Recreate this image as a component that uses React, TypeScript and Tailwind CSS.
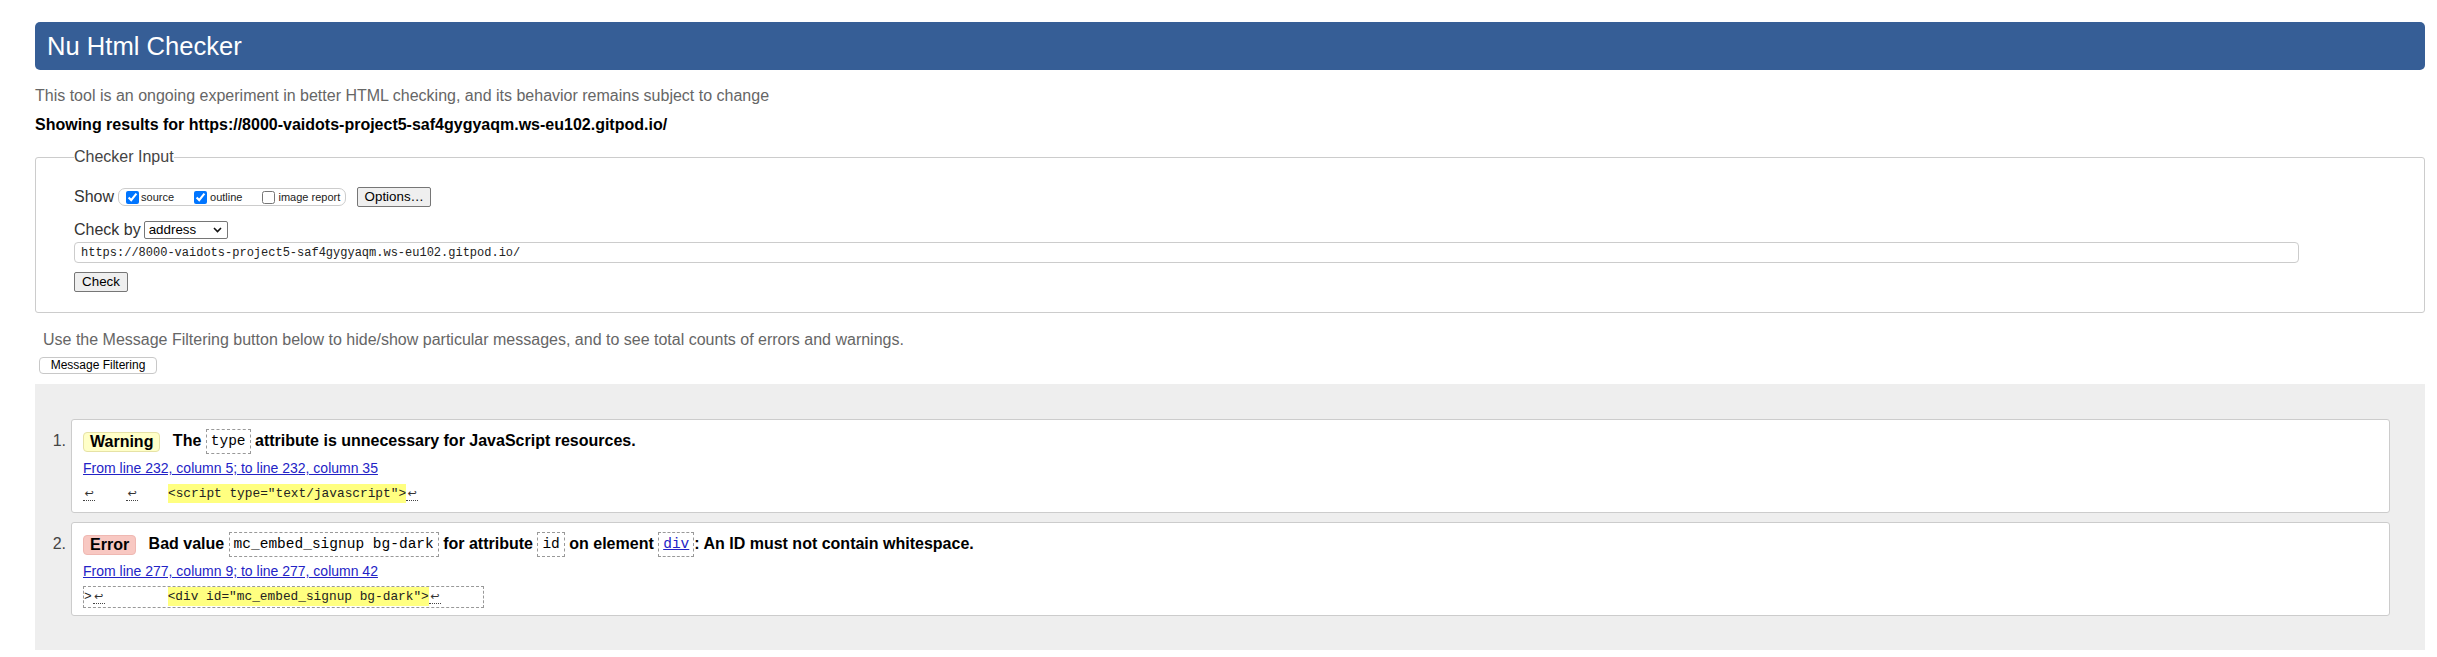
import React from 'react'

const mono = "font-['Liberation_Mono','DejaVu_Sans_Mono',monospace]"

// line break marker in source extracts
function Ret({ className = '' }: { className?: string }) {
  return (
    <span
      className={`inline-block w-[12px] border-b border-dotted border-[#444] text-center align-middle font-['DejaVu_Sans',sans-serif] text-[11px] leading-[13px] text-[#333] ${className}`}
    >
      ↩
    </span>
  )
}

function Code({ children }: { children: React.ReactNode }) {
  return (
    <code
      className={`inline-block h-[25px] border border-dashed border-[#999] px-[4px] align-middle text-[14.5px] font-normal leading-[23px] ${mono}`}
    >
      {children}
    </code>
  )
}

function Hl({ children }: { children: React.ReactNode }) {
  return <span className="bg-[#ffff80] py-[2px]">{children}</span>
}

interface MessageProps {
  n: number
  kind: 'warning' | 'error'
  title: React.ReactNode
  location: string
  extract: React.ReactNode
}

function Message({ n, kind, title, location, extract }: MessageProps) {
  return (
    <li className="flex">
      <span className="mt-[9px] w-[36px] shrink-0 pr-[5px] text-right text-[16px] leading-[25px] text-[#444]">
        {n}.
      </span>
      <div className="flex-1 rounded-[3px] border border-[#ccc] bg-white pb-[7px] pl-[11px] pt-[8px]">
        <p className="h-[25px] whitespace-nowrap text-[16px] font-bold leading-[25px]">
          {kind === 'warning' ? (
            <span className="mr-[8px] inline-block h-[20px] rounded-[4px] border border-[#e6e2a6] bg-[#ffffc8] px-[6px] align-middle leading-[18px]">
              Warning
            </span>
          ) : (
            <span className="mr-[8px] inline-block h-[20px] rounded-[4px] border border-[#efb8b2] bg-[#f8c8c2] px-[6px] align-middle leading-[18px]">
              Error
            </span>
          )}{' '}
          {title}
        </p>
        <p className="mt-[8px] text-[14px] leading-[15px]">
          <a href="#" className="text-[#2323c6] underline">
            {location}
          </a>
        </p>
        <div className={`mt-[7px] h-[22px] whitespace-pre text-[12.8px] leading-[22px] text-[#222] ${mono}`}>
          {extract}
        </div>
      </div>
    </li>
  )
}

export default function App() {
  return (
    <div className="min-h-[657px] bg-white pl-[35px] pr-[12px] pt-[22px] font-['Liberation_Sans',Arial,sans-serif] text-[16px] text-black">
      <h1 className="flex h-[48px] items-center rounded-[5px] bg-[#365e96] pl-[12px] text-[25.6px] font-normal text-white">
        Nu Html Checker
      </h1>
      <p className="mt-[17px] leading-[18px] text-[#666]">
        This tool is an ongoing experiment in better HTML checking, and its behavior remains subject to change
      </p>
      <p className="mt-[11px] font-bold leading-[18px]">
        Showing results for https://8000-vaidots-project5-saf4gygyaqm.ws-eu102.gitpod.io/
      </p>

      {/* checker input */}
      <fieldset className="mt-[14px] rounded-[3px] border border-[#ccc] pb-[20px] pl-[38px] pr-[12px]">
        <legend className="leading-[18px] text-[#444]">Checker Input</legend>

        <div className="mt-[21px] flex h-[20px] items-center">
          <span className="leading-[20px] text-[#333]">Show</span>
          <div className="ml-[4px] flex h-[18px] items-center rounded-[7px] border border-[#ccc] pl-[7px] pr-[5px] text-[11px] text-[#222]">
            <label className="flex items-center">
              <input type="checkbox" defaultChecked className="m-0 h-[13px] w-[13px] accent-[#0075ff]" />
              <span className="ml-[2px]">source</span>
            </label>
            <label className="ml-[20px] flex items-center">
              <input type="checkbox" defaultChecked className="m-0 h-[13px] w-[13px] accent-[#0075ff]" />
              <span className="ml-[3px]">outline</span>
            </label>
            <label className="ml-[20px] flex items-center">
              <input type="checkbox" className="m-0 h-[13px] w-[13px]" />
              <span className="ml-[3px]">image report</span>
            </label>
          </div>
          <button className="ml-[11px] h-[20px] w-[74px] rounded-[2px] border border-[#767676] bg-[#efefef] text-[13.33px] leading-[18px]">
            Options…
          </button>
        </div>

        <div className="mt-[14px] flex h-[18px] items-center">
          <span className="leading-[18px] text-[#333]">Check by</span>
          <div className="ml-[3px] flex h-[18px] w-[84px] items-center justify-between rounded-[2px] border border-[#767676] bg-white pl-[4px] pr-[5px] text-[13.33px]">
            <span>address</span>
            <svg width="9" height="6" viewBox="0 0 9 6" fill="none">
              <path d="M1 1l3.5 3.5L8 1" stroke="#111" strokeWidth="1.6" />
            </svg>
          </div>
        </div>

        <input
          readOnly
          value="https://8000-vaidots-project5-saf4gygyaqm.ws-eu102.gitpod.io/"
          className={`mt-[3px] block h-[21px] w-[2225px] rounded-[4px] border border-[#ccc] px-[6px] text-[12px] text-[#222] outline-none ${mono}`}
        />

        <button className="mt-[9px] block h-[20px] w-[54px] rounded-[2px] border border-[#767676] bg-[#efefef] text-[13.33px] leading-[18px]">
          Check
        </button>
      </fieldset>

      <p className="ml-[8px] mt-[18px] leading-[18px] text-[#666]">
        Use the Message Filtering button below to hide/show particular messages, and to see total counts of errors and warnings.
      </p>
      <button className="ml-[4px] mt-[8px] block h-[17px] w-[118px] rounded-[4px] border border-[#c8c8c8] bg-white text-[12px] leading-[15px]">
        Message Filtering
      </button>

      {/* results */}
      <div className="mt-[10px] bg-[#eee] pb-[34px] pr-[35px] pt-[35px]">
        <ol className="flex flex-col gap-[9px]">
          <Message
            n={1}
            kind="warning"
            title={
              <>
                The <Code>type</Code> attribute is unnecessary for JavaScript resources.
              </>
            }
            location="From line 232, column 5; to line 232, column 35"
            extract={
              <>
                <Ret />
                <Ret className="ml-[31px]" />
                <span className="ml-[30px]">
                  <Hl>{'<script type="text/javascript">'}</Hl>
                </span>
                <Ret />
              </>
            }
          />
          <Message
            n={2}
            kind="error"
            title={
              <>
                Bad value <Code>mc_embed_signup bg-dark</Code> for attribute <Code>id</Code> on element{' '}
                <Code>
                  <a href="#" className="text-[#2323c6] underline">
                    div
                  </a>
                </Code>
                : An ID must not contain whitespace.
              </>
            }
            location="From line 277, column 9; to line 277, column 42"
            extract={
              <span className="inline-block h-[22px] border border-dashed border-[#999] pr-[42px] leading-[20px]">
                {'>'}
                <Ret className="ml-[1px]" />
                <span className="ml-[63px]">
                  <Hl>{'<div id="mc_embed_signup bg-dark">'}</Hl>
                </span>
                <Ret />
              </span>
            }
          />
        </ol>
      </div>
    </div>
  )
}
